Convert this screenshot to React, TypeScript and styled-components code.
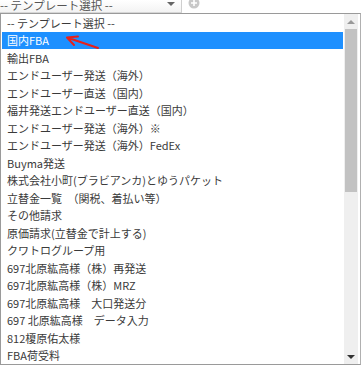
import React from "react";
import styled, { createGlobalStyle } from "styled-components";

const GlobalStyle = createGlobalStyle`
  html, body {
    margin: 0;
    padding: 0;
    background: #ffffff;
  }
  body {
    font-family: "Noto Sans CJK JP", "Noto Sans", sans-serif;
  }
`;

const Page = styled.div`
  width: 361px;
  height: 365px;
  overflow: hidden;
  display: flex;
  flex-direction: column;
`;

const Toolbar = styled.div`
  height: 13px;
  display: flex;
  align-items: stretch;
`;

const SelectBox = styled.div`
  width: 182px;
  box-sizing: border-box;
  border-right: 1px solid #cfcfcf;
  border-bottom: 1px solid #d6d6d6;
  background: linear-gradient(#ffffff, #f3f3f3);
  display: flex;
  align-items: center;
  justify-content: space-between;
  padding: 0 6px 0 0;
  font-size: 11.5px;
  line-height: 12px;
  color: #555;
`;

const SelectText = styled.span`
  transform: translateY(-1px);
  white-space: nowrap;
`;

const Caret = styled.span`
  width: 0;
  height: 0;
  border-left: 4px solid transparent;
  border-right: 4px solid transparent;
  border-top: 4px solid #666;
  transform: translateY(-2px);
`;

const PlusIcon = styled.svg`
  margin: -3px 0 0 6px;
`;

const List = styled.div`
  flex: 1;
  display: flex;
  border: 1px solid #9a9a9a;
  border-right-color: #b0b0b0;
  box-sizing: border-box;
  width: 361px;
  padding: 0 2px 0 1px;
  gap: 1px;
`;

const Options = styled.div`
  flex: 1;
  display: flex;
  flex-direction: column;
  overflow: hidden;
`;

type OptionProps = {
  selected?: boolean;
  h: number;
};

const Option = styled.div<OptionProps>`
  height: ${(p) => p.h}px;
  flex: none;
  display: flex;
  align-items: center;
  padding-left: 5px;
  font-size: 11px;
  white-space: nowrap;
  color: ${(p) => (p.selected ? "#ffffff" : "#3a3a3a")};
  background: ${(p) => (p.selected ? "#1e90ff" : "transparent")};
  position: relative;
`;

const Arrow = styled.svg`
  position: absolute;
  left: 60px;
  top: 2px;
`;

const Scrollbar = styled.div`
  width: 14px;
  display: flex;
  flex-direction: column;
  background: #efefef;
`;

const ScrollButton = styled.div`
  height: 15px;
  display: flex;
  align-items: center;
  justify-content: center;
`;

const Thumb = styled.div`
  height: 163px;
  background: #c2c2c2;
  margin: 0 1px;
`;

const Track = styled.div`
  flex: 1;
`;

const Tri = styled.span<{ down?: boolean }>`
  width: 0;
  height: 0;
  border-left: 4px solid transparent;
  border-right: 4px solid transparent;
  ${(p) => (p.down ? "border-top: 4px solid #333;" : "border-bottom: 4px solid #999;")}
`;

const options = [
  "-- テンプレート選択 --",
  "国内FBA",
  "輸出FBA",
  "エンドユーザー発送（海外）",
  "エンドユーザー直送（国内）",
  "福井発送エンドユーザー直送（国内）",
  "エンドユーザー発送（海外）※",
  "エンドユーザー発送（海外）FedEx",
  "Buyma発送",
  "株式会社小町(ブラビアンカ)とゆうパケット",
  "立替金一覧　（関税、着払い等）",
  "その他請求",
  "原価請求(立替金で計上する)",
  "クワトログループ用",
  "697北原紘高様（株）再発送",
  "697北原紘高様（株）MRZ",
  "697北原紘高様　大口発送分",
  "697 北原紘高様　データ入力",
  "812榎原佑太様",
  "FBA荷受料",
];

const App = () => {
  const rowHeight = 17.5;

  return (
    <>
      <GlobalStyle />
      <Page>
        <Toolbar>
          <SelectBox>
            <SelectText>-- テンプレート選択 --</SelectText>
            <Caret />
          </SelectBox>
          <PlusIcon width="12" height="12" viewBox="0 0 12 12">
            <circle cx="6" cy="6" r="5.5" fill="#c8c8c8" />
            <path d="M6 3v6M3 6h6" stroke="#fff" strokeWidth="1.6" />
          </PlusIcon>
        </Toolbar>
        <List>
          <Options>
            {options.map((o, i) => (
              <Option key={o} h={rowHeight} selected={i === 1}>
                {o}
                {i === 1 && (
                  <Arrow width="40" height="16" viewBox="0 0 40 16">
                    <path
                      d="M36 14 L5 3.5 M5 3.5 L16 2.5 M5 3.5 L12 11"
                      stroke="#e8201a"
                      strokeWidth="2"
                      strokeLinecap="round"
                      fill="none"
                    />
                  </Arrow>
                )}
              </Option>
            ))}
          </Options>
          <Scrollbar>
            <ScrollButton>
              <Tri />
            </ScrollButton>
            <Thumb />
            <Track />
            <ScrollButton>
              <Tri down />
            </ScrollButton>
          </Scrollbar>
        </List>
      </Page>
    </>
  );
};

export default App;
